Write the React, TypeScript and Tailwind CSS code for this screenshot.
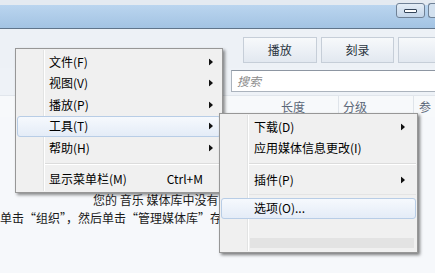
import React from "react";

const Arrow = () => (
  <svg width="4" height="7" viewBox="0 0 4 7" className="block">
    <path d="M0 0 L4 3.5 L0 7 Z" fill="#111" />
  </svg>
);

const Hl = () => (
  <div className="absolute left-[1px] right-[1px] top-0 bottom-0 rounded-[3px] border border-[#b8cde6] bg-[#eaf0f8] bg-linear-to-b from-[#f6f9fd] to-[#e4ecf7]" />
);

export default function App() {
  return (
    <div className="relative w-[435px] h-[273px] overflow-hidden bg-[#f6f8fb] font-['Noto_Sans_CJK_SC',sans-serif] text-[12px] text-black">
      {/* title bar */}
      <div className="relative h-[29px] border-b border-[#60748a] flex flex-col">
        <div className="h-[5px] bg-[#e4eaf1]" />
        <div className="flex-1 bg-[#abc9e8] bg-linear-to-b from-[#bad5ef] to-[#a3c3e3]" />
        <div className="absolute right-0 top-[3px] flex">
          <div className="w-[29px] h-[15px] border border-[#6f8196] rounded-[3px] bg-[#d3e1ef] bg-linear-to-b from-[#e4edf6] to-[#c3d5e9] flex items-center justify-center">
            <div className="w-[13px] h-[4px] bg-white border border-[#34455a] rounded-[1px]" />
          </div>
          <div className="ml-[3px] w-[7px] h-[15px] border border-r-0 border-[#6f8196] rounded-l-[3px] bg-[#d3e1ef]" />
        </div>
      </div>

      {/* toolbar with tabs */}
      <div className="h-[39px] bg-[#edf1f6] pt-[8px] pl-[243px] flex gap-[4px]">
        <div className="w-[80px] h-[26px] border border-[#c6ced8] bg-[#eceff4] bg-linear-to-b from-[#f7f9fb] to-[#e2e8f0] flex items-center justify-center text-[#2a3440]">
          播放
        </div>
        <div className="w-[80px] h-[26px] border border-[#c6ced8] bg-[#eceff4] bg-linear-to-b from-[#f7f9fb] to-[#e2e8f0] flex items-center justify-center text-[#2a3440]">
          刻录
        </div>
        <div className="w-[40px] h-[26px] border border-r-0 border-[#c6ced8] bg-[#eceff4] bg-linear-to-b from-[#f7f9fb] to-[#e2e8f0]" />
      </div>

      {/* search row */}
      <div className="h-[28px] bg-[#eef2f7] pl-[231px] pt-[2px] border-b border-[#e1e6ec]">
        <div className="w-[220px] h-[22px] border border-[#abb3bd] border-t-[#8d96a2] bg-white pl-[5px] leading-[20px] italic text-[#8c8c8c]">
          搜索
        </div>
      </div>

      {/* column header */}
      <div className="h-[21px] flex items-stretch text-[#5b6778] bg-[#f7f9fb]">
        <div className="w-[281px]" />
        <div className="w-[57px] flex items-center">长度</div>
        <div className="w-px bg-[#dfe4ea]" />
        <div className="w-[74px] pl-[4px] flex items-center">分级</div>
        <div className="w-px bg-[#dfe4ea]" />
        <div className="pl-[5px] flex items-center">参</div>
      </div>

      {/* content text */}
      <div className="pt-[74px] w-[219px] overflow-hidden text-[#1a1a1a]">
        <div className="pl-[93px] whitespace-nowrap leading-[18px]">您的 音乐 媒体库中没有</div>
        <div className="whitespace-nowrap leading-[18px]">单击“组织”，然后单击“管理媒体库”存</div>
      </div>

      {/* main menu */}
      <div className="absolute left-[15px] top-[48px] w-[208px] h-[145px] bg-[#f0f0f0] border border-[#979797] shadow-[2px_2px_3px_rgba(0,0,0,0.45)] pt-[2px]">
        <div className="absolute left-[27px] top-[1px] bottom-[1px] w-[2px] border-l border-[#e2e3e3] border-r border-r-white" />
        {[
          ["文件(F)", false],
          ["视图(V)", false],
          ["播放(P)", false],
          ["工具(T)", true],
          ["帮助(H)", false],
        ].map(([label, hl]) => (
          <div key={label as string} className="relative h-[21.5px] flex items-center pl-[33px]">
            {hl ? <Hl /> : null}
            <span className="relative">{label as string}</span>
            <div className="absolute right-[9px] top-1/2 -translate-y-1/2">
              <Arrow />
            </div>
          </div>
        ))}
        <div className="h-[10px] flex flex-col justify-center pl-[29px] pr-[1px]">
          <div className="h-px bg-[#dcdcdc]" />
          <div className="h-px bg-white" />
        </div>
        <div className="relative h-[21.5px] flex items-center pl-[33px]">
          <span>显示菜单栏(M)</span>
          <span className="absolute right-[19px]">Ctrl+M</span>
        </div>
      </div>

      {/* tools submenu */}
      <div className="absolute left-[219px] top-[113px] w-[199px] h-[140px] bg-[#f0f0f0] border border-[#979797] shadow-[2px_2px_3px_rgba(0,0,0,0.5)] pt-[2px]">
        <div className="absolute left-[27px] top-[1px] bottom-[1px] w-[2px] border-l border-[#e2e3e3] border-r border-r-white" />
        <div className="relative h-[21.5px] flex items-center pl-[34px]">
          <span>下载(D)</span>
          <div className="absolute right-[12px] top-1/2 -translate-y-1/2">
            <Arrow />
          </div>
        </div>
        <div className="relative h-[21.5px] flex items-center pl-[34px]">
          <span>应用媒体信息更改(I)</span>
        </div>
        <div className="h-[10px] flex flex-col justify-center pl-[29px] pr-[1px]">
          <div className="h-px bg-[#dcdcdc]" />
          <div className="h-px bg-white" />
        </div>
        <div className="relative h-[21.5px] flex items-center pl-[34px]">
          <span>插件(P)</span>
          <div className="absolute right-[12px] top-1/2 -translate-y-1/2">
            <Arrow />
          </div>
        </div>
        <div className="h-[7px] flex flex-col justify-center pl-[29px] pr-[1px]">
          <div className="h-px bg-[#e4e4e4]" />
        </div>
        <div className="relative h-[21.5px] flex items-center pl-[34px]">
          <Hl />
          <span className="relative">选项(O)...</span>
        </div>
        <div className="mt-[19px] ml-[30px] mr-[3px] h-[10px] bg-[#e3e3e3]" />
      </div>
    </div>
  );
}
